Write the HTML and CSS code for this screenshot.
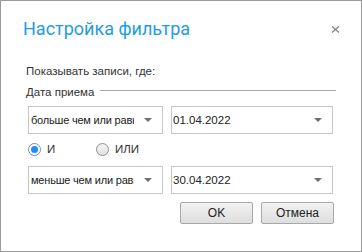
FILE: index.html
```html
<!DOCTYPE html>
<html lang="ru">
<head>
    <meta charset="UTF-8">
    <title>Настройка фильтра</title>
    <link rel="stylesheet" href="styles.css">
</head>
<body>
    <div class="dialog">
        <div class="dialog-header">
            <h1 class="dialog-title">Настройка фильтра</h1>
            <span class="close">
                <svg width="9" height="7" viewBox="0 0 9 7">
                    <path d="M1 0.5 L8 6.5 M8 0.5 L1 6.5" stroke="#8a8a8a" stroke-width="1.4"/>
                </svg>
            </span>
        </div>

        <div class="dialog-body">
            <p class="caption">Показывать записи, где:</p>

            <div class="group-title">
                <span>Дата приема</span>
                <span class="group-line"></span>
            </div>

            <div class="filter-row">
                <div class="combo combo-op">
                    <span class="combo-text">больше чем или равно</span>
                    <span class="combo-arrow"></span>
                </div>
                <div class="combo combo-date">
                    <span class="combo-text">01.04.2022</span>
                    <span class="combo-arrow"></span>
                </div>
            </div>

            <div class="radio-row">
                <label class="radio checked"><span class="radio-mark"></span>И</label>
                <label class="radio"><span class="radio-mark"></span>ИЛИ</label>
            </div>

            <div class="filter-row second">
                <div class="combo combo-op">
                    <span class="combo-text">меньше чем или равно</span>
                    <span class="combo-arrow"></span>
                </div>
                <div class="combo combo-date">
                    <span class="combo-text">30.04.2022</span>
                    <span class="combo-arrow"></span>
                </div>
            </div>

            <div class="buttons">
                <button type="button">OK</button>
                <button type="button">Отмена</button>
            </div>
        </div>
    </div>
</body>
</html>
```

FILE: styles.css
```css
body {
    margin: 0;
    padding: 0;
    background-color: #fff;
    font-family: "Liberation Sans", Arial, sans-serif;
    color: #333;
}

.dialog {
    box-sizing: border-box;
    width: 362px;
    height: 252px;
    border: 1px solid #9b9b9b;
    background-color: #fff;
}

/* Header */
.dialog-header {
    display: flex;
    justify-content: space-between;
    align-items: flex-start;
    padding: 15px 21px 0 22px;
}

.dialog-title {
    margin: 0;
    font-family: Roboto, sans-serif;
    font-weight: normal;
    font-size: 18px;
    line-height: 26px;
    color: #1e9ce6;
}

.close {
    display: block;
    margin-top: 10px;
    line-height: 0;
}

/* Body */
.dialog-body {
    padding: 0 27px 0 25px;
}

.caption {
    margin: 22px 0 0 0;
    font-size: 11.5px;
    line-height: 14px;
}

.group-title {
    display: flex;
    align-items: flex-start;
    gap: 6px;
    margin-top: 7px;
    font-size: 11.5px;
    line-height: 14px;
}

.group-line {
    flex: 1;
    height: 1px;
    margin-top: 5px;
    margin-right: -2px;
    background-color: #a9a9a9;
}

.filter-row {
    display: flex;
    gap: 8px;
    margin-left: 2px;
    margin-top: 7px;
}

.filter-row.second {
    margin-top: 10px;
}

.combo {
    box-sizing: border-box;
    display: flex;
    align-items: center;
    height: 28px;
    border: 1px solid #c6c6c6;
    background-color: #fff;
}

.combo-op {
    width: 135px;
    font-size: 11px;
    letter-spacing: -0.2px;
    padding-left: 2px;
}

.combo-date {
    width: 162px;
    font-size: 11.5px;
    padding-left: 1px;
}

.combo-text {
    flex: 1;
    overflow: hidden;
    white-space: nowrap;
    color: #222;
}

.combo-op .combo-text {
    flex: 0 0 103px;
}

.combo-arrow {
    flex: 1;
    display: flex;
    justify-content: center;
}

.combo-date .combo-arrow {
    flex: 0 0 28px;
}

.combo-arrow::after {
    content: "";
    border-left: 4px solid transparent;
    border-right: 4px solid transparent;
    border-top: 4px solid #6e6e6e;
}

/* Radio buttons */
.radio-row {
    display: flex;
    margin: 9px 0 0 2px;
    font-size: 11.5px;
    line-height: 13px;
}

.radio {
    display: flex;
    align-items: center;
    gap: 6px;
    width: 68px;
}

.radio-mark {
    box-sizing: border-box;
    width: 13px;
    height: 13px;
    border: 1px solid #8f8f8f;
    border-radius: 50%;
    background: linear-gradient(#f4f4f4, #e2e2e2);
    display: flex;
    align-items: center;
    justify-content: center;
}

.radio.checked .radio-mark {
    border-color: #6e8fb0;
    background: #fff;
}

.radio.checked .radio-mark::after {
    content: "";
    width: 7px;
    height: 7px;
    border-radius: 50%;
    background-color: #1a8cff;
}

/* Buttons */
.buttons {
    display: flex;
    justify-content: flex-end;
    gap: 8px;
    margin-top: 8px;
}

button {
    box-sizing: border-box;
    width: 73px;
    height: 22px;
    padding: 0;
    border: 1px solid #a8a8a8;
    border-radius: 2px;
    background: linear-gradient(#f2f2f2, #dedede);
    font-family: "Liberation Sans", Arial, sans-serif;
    font-size: 12px;
    color: #222;
}
```
